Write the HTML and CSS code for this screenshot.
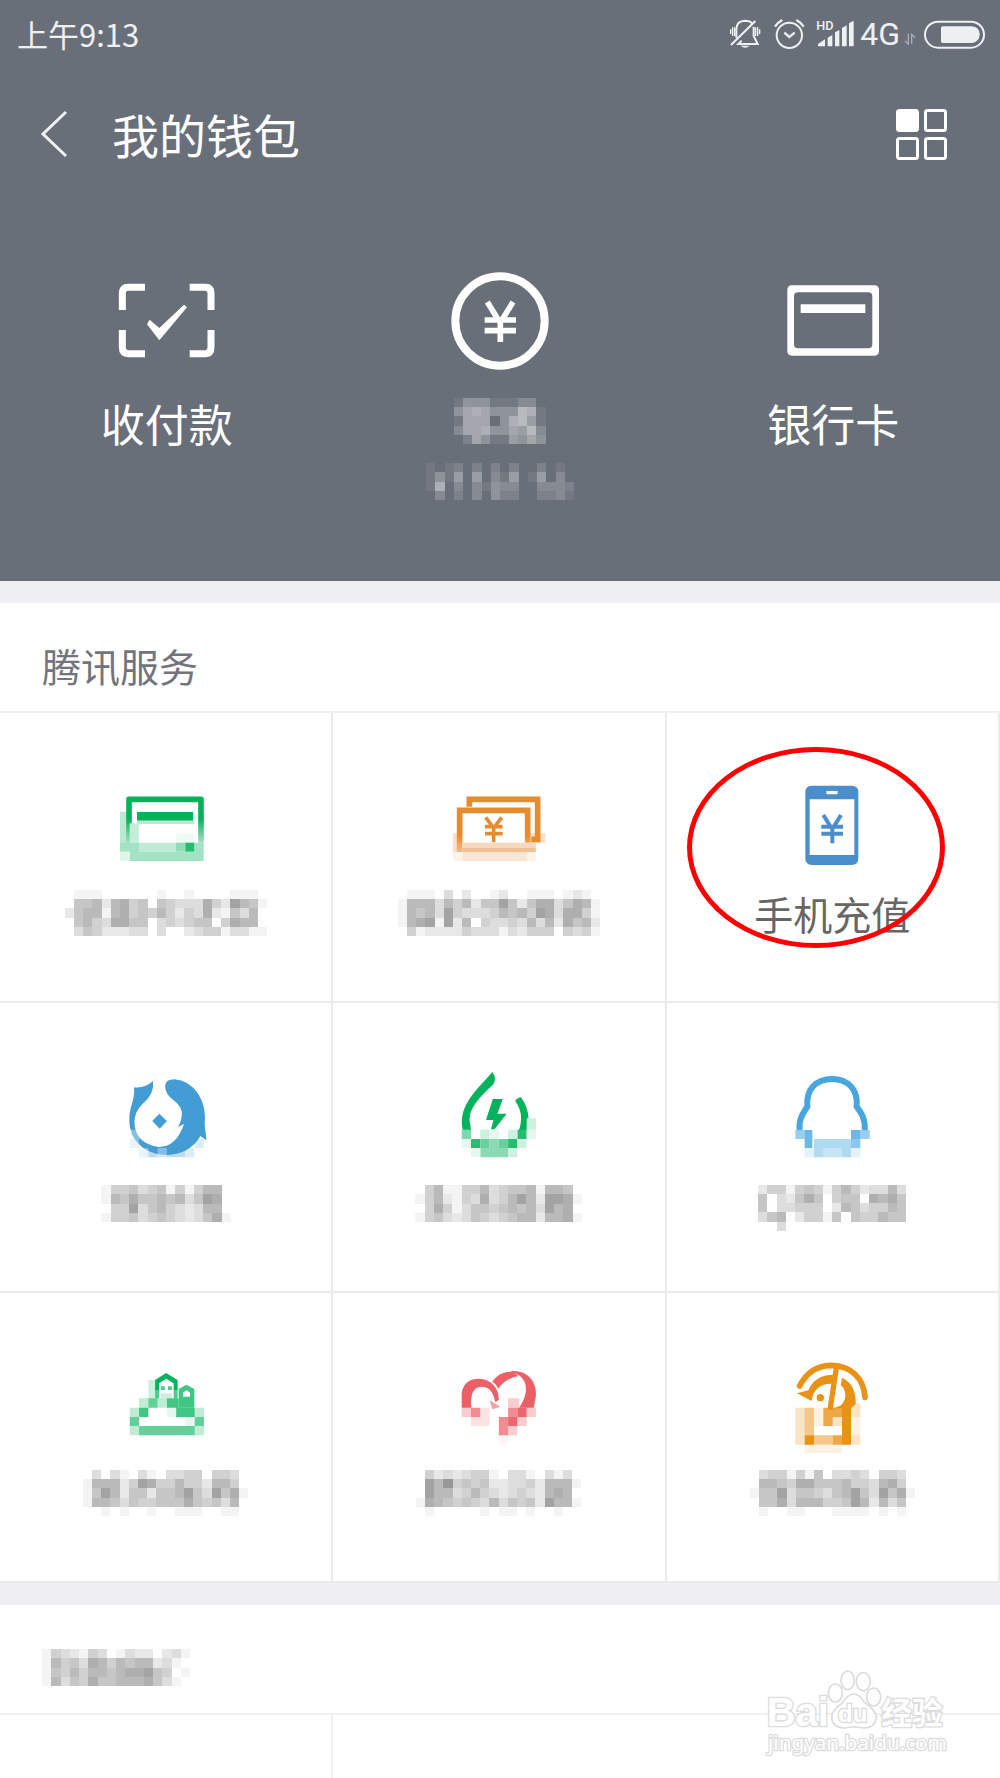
FILE: index.html
```html
<!DOCTYPE html>
<html lang="zh-CN">
<head>
<meta charset="utf-8">
<meta name="viewport" content="width=device-width, initial-scale=1">
<title>我的钱包</title>
<link rel="stylesheet" href="styles.css">
</head>
<body>
<main class="page">
  <header class="hero">
    <div class="status">
      <span class="status-time">上午9:13</span>
      <div class="status-icons">
        <svg class="ic-bell" viewBox="84 54 96 96" fill="none" stroke="#eff0f2" stroke-width="6">
          <path d="M106 113V88Q106 63 132 62Q148 62 153 70M158 80V108L170 132H112L122 122M90 135L163 63"/>
          <path d="M119 137H146Q132 149 119 137Z" fill="#eff0f2" stroke="none"/>
          <path d="M89 88V102M95 82V108M101 82V108M164 82V108M170 82V108M176 88V102" stroke-width="4"/>
        </svg>
        <svg class="ic-alarm" viewBox="216 54 96 96" fill="none" stroke="#eff0f2" stroke-width="6">
          <circle cx="265" cy="106" r="38"/>
          <path d="M250 98L265 111L281 98" stroke-width="7"/>
          <path d="M222 80Q229 68 244 60M286 60Q301 68 308 80" stroke-width="7"/>
        </svg>
        <svg class="ic-signal" viewBox="345 54 114 90" fill="#eff0f2">
          <text x="346" y="86" class="hd">HD</text>
          <path d="M351 136V129L372 115V136ZM380 136V110L394 102V136ZM402 136V94L415 87V136ZM423 136V81L437 73V136ZM444 136V67L458 59V136Z"/>
        </svg>
        <span class="net">4G</span>
        <svg class="ic-updown" viewBox="612 99 36 36" fill="none" stroke="#a9adb3" stroke-width="4">
          <path d="M625 101V132L615 123M635 132V103L646 113"/>
        </svg>
        <svg class="ic-battery" viewBox="672 57 183 87">
          <rect x="675" y="62" width="177" height="78" rx="39" fill="none" stroke="#eff0f2" stroke-width="6"/>
          <path d="M728 76H815Q838 78 839 100Q838 124 815 126H728Q723 126 723 121V81Q723 76 728 76Z" fill="#eff0f2"/>
        </svg>
      </div>
    </div>
    <div class="titlebar">
      <button class="icon-btn" type="button" aria-label="返回">
        <svg class="ic-back" viewBox="0 0 28 48" fill="none" stroke="#f0f1f2" stroke-width="3"><path d="M26 2L3 24L26 46"/></svg>
      </button>
      <h1>我的钱包</h1>
      <button class="icon-btn" type="button" aria-label="更多">
        <svg class="ic-grid" viewBox="0 0 51 51" fill="none" stroke="#fff" stroke-width="3">
          <rect x="1.5" y="1.5" width="20" height="20" rx="2" fill="#fff"/>
          <rect x="29.5" y="1.5" width="20" height="20" rx="2"/>
          <rect x="1.5" y="29.500" width="20" height="20" rx="2"/>
          <rect x="29.500" y="29.500" width="20" height="20" rx="2"/>
        </svg>
      </button>
    </div>
    <nav class="actions">
      <a class="action" href="#">
        <svg class="action-icon" viewBox="113 36 294 294" fill="none" stroke="#fff" stroke-width="21">
          <path d="M194 82H144Q126 82 126 100V150M328 82H376Q392 82 392 100V150M126 210V262Q126 281 144 281H194M392 210V262Q392 281 376 281H328"/>
          <path d="M200 193L208 179L237 204L311 134L320 142L237 241Z" fill="#fff" stroke="none"/>
        </svg>
        <span class="action-label">收付款</span>
      </a>
      <a class="action" href="#">
        <svg class="action-icon" viewBox="1112 36 294 294" fill="none" stroke="#fff">
          <circle cx="1259" cy="183" r="134" stroke-width="24"/>
          <path d="M1221 126L1254 180M1298 126L1265 180M1260 172V246M1213 180H1307M1213 212H1307" stroke-width="17"/>
        </svg>
        <span class="action-label"><svg class="mosaic light" data-rows="1444111330 4676444871 1666047851 3667446583 0264115464"></svg></span>
        <svg class="mosaic light balance" data-rows="1012020202002010 1415050315015030 1703031433003332 0302030422002231"></svg>
      </a>
      <a class="action" href="#">
        <svg class="action-icon" viewBox="672 36 294 294" fill="none" stroke="#fff">
          <path fill="#fff" fill-rule="evenodd" stroke="none" d="M696 76H943Q957 76 957 90V273Q957 287 943 287H696Q682 287 682 273V90Q682 76 696 76ZM714 97Q702 97 702 109V253Q702 265 714 265H925Q937 265 937 253V109Q937 97 925 97Z"/>
          <path d="M722 146H916" stroke-width="26"/>
        </svg>
        <span class="action-label">银行卡</span>
      </a>
    </nav>
  </header>

  <section class="group">
    <h2 class="group-title">腾讯服务</h2>
    <div class="tiles">
      <a class="tile" href="#">
        <svg class="tile-icon" viewBox="354 471 288 288">
          <defs><linearGradient id="fadeGreen" x1="0" y1="0" x2="0" y2="1"><stop offset=".45" stop-color="#03b35b"/><stop offset="1" stop-color="#a2e3c3"/></linearGradient></defs>
          <path d="M360 575H389V695H360Z" fill="#a2e3c3" opacity=".75"/>
          <path d="M387 668V538H603V668" fill="none" stroke="url(#fadeGreen)" stroke-width="17" stroke-linejoin="round"/>
          <path d="M411 576H579V602H411Z" fill="#03b35b"/>
          <path d="M411 602H583V612H411Z" fill="#b9ead1"/>
          <path d="M389 610H417V668H389Z" fill="#c5edd9"/>
          <path d="M360 668H417V695H360ZM583 668H611V695H583ZM389 695H611V723H389Z" fill="#a2e3c6"/>
          <path d="M417 668H528V695H417Z" fill="#bfead6"/>
          <path d="M528 640H583V668H528Z" fill="#eefaf4"/>
          <path d="M528 668H556V695H528Z" fill="#8fdcb7"/>
          <path d="M556 668H583V695H556Z" fill="#22bd71"/>
          <path d="M360 695H389V723H360Z" fill="#def5ea"/>
        </svg>
        <span class="tile-label"><svg class="mosaic" data-rows="0111000000100100001110 0556267450543337428651 2566167454642437215360 0564377550343455047660 0354222330300234413311"></svg></span>
      </a>
      <a class="tile" href="#">
        <svg class="tile-icon" viewBox="357 231 288 288" fill="none" stroke="#e58c2f" stroke-width="17">
          <defs><linearGradient id="fadeOrange" x1="0" y1="0" x2="0" y2="1"><stop offset=".6" stop-color="#e58c2f"/><stop offset="1" stop-color="#f0bd8c"/></linearGradient></defs>
          <path d="M363 400H389V456H363ZM583 400H611V456H583ZM612 400H640V428H612Z" fill="#f8dfc7" stroke="none"/>
          <path d="M412 320V298H617V418H598"/>
          <path d="M383 456V331H587V428" stroke="url(#fadeOrange)"/>
          <path d="M461 352L485 384L509 352M485 380V427M459 380H512M459 401H512" stroke-width="11"/>
          <path d="M391 428H611V444H391Z" fill="#f6d9be" stroke="none"/>
          <path d="M391 444H611V456H391Z" fill="#f1c092" stroke="none"/>
          <path d="M391 456H585V483H391Z" fill="#f9e6d5" stroke="none"/>
          <path d="M363 456H391V483H363ZM585 456H612V483H585Z" fill="#fdf3eb" stroke="none"/>
        </svg>
        <span class="tile-label"><svg class="mosaic" data-rows="0111030200120011101210 1666364625585257735761 1656384333465648737741 1678182604334363627562 0412222433313244404341"></svg></span>
      </a>
      <a class="tile" href="#">
        <svg class="tile-icon" viewBox="357 231 288 288" fill="#4a8ecb">
          <path fill-rule="evenodd" d="M441 257H560Q580 257 580 277V475Q580 495 560 495H441Q421 495 421 475V277Q421 257 441 257ZM434 298V465H568V298ZM484 273V283H518V273Z"/>
          <path d="M475 345L499 384M528 345L504 384M502 378V430M469 380H534M469 401H534" fill="none" stroke="#4a8ecb" stroke-width="12"/>
        </svg>
        <span class="tile-label">手机充值</span>
        <span class="mark"></span>
      </a>
      <a class="tile" href="#">
        <svg class="tile-icon" viewBox="218 51 269 288" preserveAspectRatio="none" fill="#439cd3">
          <path d="M316 93Q322 130 286 163Q264 185 264 220Q268 282 333 291Q382 290 403 222L385 232Q396 217 397 190Q396 169 374 151Q350 132 350 107Q352 88 376 88Q416 90 443 132Q466 170 461 225L466 271L449 258Q420 312 355 315Q285 312 258 255Q243 215 254 172Q265 140 263 112Q292 116 316 93ZM334 191L355 213L335 236L314 213Z"/>
          <path d="M251 267H277V294H251ZM277 294H303V322H277ZM406 294H432V322H406ZM432 267H458V294H432Z" opacity=".18"/>
          <path d="M303 294H329V322H303ZM329 294H406V322H329Z" opacity=".35"/>
          <path d="M303 239H355V267H303Z" fill="#fff" opacity=".6"/>
          <path d="M251 239H300V267H277V294H303V322H329V294H355V322H251Z" fill="#fff" opacity=".35"/>
        </svg>
        <span class="tile-label"><svg class="mosaic" data-rows="14453451414660 16575565635870 04483564323660 14453454323571"></svg></span>
      </a>
      <a class="tile" href="#">
        <svg class="tile-icon" viewBox="1154 51 269 288" preserveAspectRatio="none" fill="#03b35b">
          <path d="M1270 66Q1283 82 1273 103C1240 136 1204 173 1206 210L1210 240H1187Q1178 202 1197 163C1214 128 1242 100 1270 66ZM1334 153Q1341 142 1350 142Q1370 169 1372 210L1367 240H1345Q1360 191 1334 153ZM1271 147H1299L1284 191H1310L1276 238H1266L1273 210H1252Z"/>
          <path d="M1184 239H1210V267H1184Z" fill="#7fd8ad"/>
          <path d="M1210 267H1236V294H1210ZM1314 267H1340V294H1314ZM1340 239H1366V267H1340Z" fill="#25bd72"/>
          <path d="M1236 267H1262V294H1236ZM1288 267H1314V294H1288Z" fill="#68d09e"/>
          <path d="M1262 267H1288V294H1262ZM1236 294H1314V322H1236Z" fill="#8adbb3"/>
          <path d="M1236 239H1262V267H1236ZM1314 239H1340V267H1314ZM1340 267H1366V294H1340ZM1314 294H1340V322H1314ZM1366 205H1392V239H1366Z" fill="#cdf0df"/>
          <path d="M1184 267H1210V294H1184ZM1210 294H1236V322H1210ZM1366 239H1392V267H1366ZM1262 239H1288V267H1262Z" fill="#e5f7ee"/>
        </svg>
        <span class="tile-label"><svg class="mosaic" data-rows="046114463455616650 146214373468628871 047413554565638670 145323543456626671"></svg></span>
      </a>
      <a class="tile" href="#">
        <svg class="tile-icon" viewBox="195 51 288 288" fill="none" stroke="#47a6e0" stroke-width="18">
          <path d="M242 240C238 208 252 190 265 170C260 120 290 87 339 87C390 87 418 122 413 170C428 190 440 208 437 240"/>
          <g stroke="none" fill="#47a6e0">
            <path d="M229 240H257V267H229ZM424 240H452V267H424Z" opacity=".55"/>
            <path d="M257 240H280V294H257ZM396 240H424V267H396Z" opacity=".8"/>
            <path d="M396 267H424V294H396Z" opacity=".62"/>
            <path d="M285 267H396V294H285ZM285 294H313V322H285ZM369 294H396V322H369Z" opacity=".43"/>
            <path d="M313 294H369V322H313Z" opacity=".3"/>
            <path d="M257 294H285V322H257ZM396 294H424V322H396Z" opacity=".15"/>
          </g>
        </svg>
        <span class="tile-label"><svg class="mosaic" data-rows="0000000000000000 2441454146423363 5032575045507675 5033444026534465 3560244150544655 0030000000000000"></svg></span>
      </a>
      <a class="tile" href="#">
        <svg class="tile-icon" viewBox="218 51 269 288" preserveAspectRatio="none" fill="#03b35b">
          <path d="M303 120H323V175H303Z" opacity=".2"/>
          <path d="M322 120L353 99L385 120V150H374V130L353 116L333 130V150H322Z"/>
          <path d="M322 148H333V175H322ZM374 148H385V175H374ZM338 139H349V150H338ZM358 139H369V150H358Z" opacity=".7"/>
          <path d="M338 160H369V175H338Z" opacity=".2"/>
          <path fill-rule="evenodd" d="M388 147L410 134L432 147V203H388ZM400 158V170H420V158L410 151Z" opacity=".75"/>
          <path d="M277 175H303V203H277ZM251 203H277V231H251ZM251 258H277V286H251ZM329 175H355V203H329ZM433 203H459V231H433ZM433 258H459V286H433Z" opacity=".25"/>
          <path d="M277 203H303V231H277ZM355 175H388V203H355ZM381 203H433V231H381Z" opacity=".75"/>
          <path d="M303 175H329V203H303ZM251 231H277V258H251ZM277 258H433V286H277ZM433 231H459V258H433Z" opacity=".62"/>
          <path d="M355 203H381V231H355ZM407 231H433V258H407Z" opacity=".1"/>
        </svg>
        <span class="tile-label"><svg class="mosaic" data-rows="030310310334404430 166624874464426640 158625525568538571 166535445557545360 001010010011100110"></svg></span>
      </a>
      <a class="tile" href="#">
        <svg class="tile-icon" viewBox="1154 51 269 288" preserveAspectRatio="none" fill="#ed5f66">
          <path d="M1184 203V160C1188 128 1208 116 1233 116C1265 118 1288 140 1288 180L1278 186C1272 153 1260 140 1238 140C1217 142 1208 160 1211 203Z"/>
          <path d="M1269 125Q1292 92 1328 96L1343 108Q1302 118 1286 147Q1282 132 1269 125Z"/>
          <path d="M1320 93C1368 90 1394 122 1392 167L1386 203H1345C1370 165 1372 125 1343 105Z"/>
          <path d="M1262 180L1292 200L1270 208Z" opacity=".6"/>
          <path d="M1210 203H1236V231H1210ZM1314 203H1340V231H1314ZM1288 231H1314V286H1288Z" opacity=".72"/>
          <path d="M1340 203H1366V231H1340ZM1314 231H1340V258H1314Z" opacity=".95"/>
          <path d="M1184 203H1210V231H1184ZM1340 231H1366V258H1340ZM1314 258H1340V286H1314ZM1366 203H1392V231H1366ZM1314 175H1345V203H1314Z" opacity=".32"/>
          <path d="M1210 231H1262V258H1210ZM1236 203H1262V231H1236Z" opacity=".18"/>
          <path d="M1288 286H1314V314H1288Z" opacity=".06"/>
        </svg>
        <span class="tile-label"><svg class="mosaic" data-rows="042323441033103130 086945452233426661 086634643234326760 176545436354528661 010000010110100100"></svg></span>
      </a>
      <a class="tile" href="#">
        <svg class="tile-icon" viewBox="195 51 288 288" fill="#e99216">
          <path d="M242 138C266 90 300 76 338 76C398 78 434 115 438 172" fill="none" stroke="#e99216" stroke-width="17" stroke-linecap="round"/>
          <path d="M344 84H360L341 210H325Z"/>
          <path d="M234 160L268 151Q288 104 342 104L339 131C302 130 282 150 278 183Z"/>
          <circle cx="304" cy="173" r="11"/>
          <path d="M369 113Q412 133 410 192L396 205H340Q378 200 379 165Q378 145 365 136Z"/>
          <path d="M369 203H396V314H369ZM257 286H285V314H257Z"/>
          <path d="M313 203H369V231H313ZM313 231H341V258H313ZM341 286H369V314H341Z" opacity=".8"/>
          <path d="M257 203H285V286H257ZM285 286H341V314H285Z" opacity=".5"/>
          <path d="M229 203H257V314H229ZM396 190H424V231H396ZM396 286H424V314H396ZM341 231H369V258H341Z" opacity=".25"/>
          <path d="M257 314H369V341H257ZM285 203H313V258H285ZM396 231H424V286H396Z" opacity=".12"/>
        </svg>
        <span class="tile-label"><svg class="mosaic" data-rows="034414150334304430 066547755564436740 155835543568538571 055736664458626350 010011000111101010"></svg></span>
      </a>
    </div>
  </section>

  <section class="group last">
    <h2 class="group-title"><svg class="mosaic" data-rows="1432143013220231 1645376465662310 1546466567785401 1635475566675310"></svg></h2>
    <div class="tiles stub"><span></span></div>
  </section>

  <svg class="brand" viewBox="192 264 552 276" role="img" aria-label="Baidu 经验">
    <g fill="#fff" stroke="#dcdcdc" stroke-width="5">
      <text x="200" y="438" class="brand-latin">Bai</text>
      <ellipse cx="406" cy="339" rx="21" ry="27"/>
      <ellipse cx="443" cy="301" rx="20" ry="28"/>
      <ellipse cx="490" cy="305" rx="21" ry="27"/>
      <ellipse cx="521" cy="351" rx="21" ry="27"/>
      <path d="M461 342Q481 344 492 366Q529 392 529 414Q522 446 490 444Q461 438 434 444Q398 444 395 412Q396 390 426 370Q442 344 461 342Z"/>
      <text x="414" y="427" class="brand-du">du</text>
      <text x="544" y="432" class="brand-cjk">经验</text>
      <text x="204" y="511" class="brand-url">jingyan.baidu.com</text>
    </g>
  </svg>
</main>
<script src="mosaic.js"></script>
</body>
</html>
```

FILE: styles.css
```css
* { box-sizing: border-box; }

body {
  margin: 0;
  background: #fff;
  font-family: "Noto Sans CJK SC", "Noto Sans", sans-serif;
}

svg { display: block; flex: none; }

a { color: inherit; text-decoration: none; }

h1, h2 { margin: 0; font-weight: 400; }

.page {
  position: relative;
  display: flex;
  flex-direction: column;
  min-height: 100vh;
}

/* header */
.hero {
  background: #696f79;
  color: #fff;
  padding-bottom: 81px;
}

.status {
  display: flex;
  align-items: center;
  justify-content: space-between;
  height: 68px;
  padding: 0 15px 0 17px;
  color: #eff0f2;
}

.status-time { font-size: 31px; line-height: 40px; }

.status-icons { display: flex; align-items: center; }

.ic-bell { width: 32px; height: 32px; margin-right: 12px; }
.ic-alarm { width: 32px; height: 32px; margin-right: 11px; }
.ic-signal { width: 38px; height: 30px; margin-right: 6px; }
.hd { font: 500 38px Roboto, sans-serif; }
.net { font: 32px/40px Roboto, sans-serif; margin-right: 4px; }
.ic-updown { width: 12px; height: 12px; margin: 10px 8px 0 0; }
.ic-battery { width: 61px; height: 29px; }

.titlebar {
  display: flex;
  align-items: center;
  height: 132px;
  padding: 0 53px 0 40px;
}

.titlebar h1 { flex: 1; margin-left: 44px; font-size: 47px; line-height: 64px; }

.icon-btn { padding: 0; border: 0; background: none; }
.ic-back { width: 28px; height: 48px; }
.ic-grid { width: 51px; height: 51px; }

.actions {
  display: grid;
  grid-template-columns: repeat(3, 1fr);
  padding-top: 72px;
}

.action { display: flex; flex-direction: column; align-items: center; }
.action-icon { width: 98px; height: 98px; }
.action-label { height: 50px; margin-top: 28px; font-size: 44px; line-height: 50px; }
.balance { margin-top: 15px; }

/* service groups */
.group { border-top: 22px solid #efeff4; }

.group-title {
  display: flex;
  align-items: center;
  height: 110px;
  padding: 16px 42px 0;
  border-bottom: 2px solid #f0f0f0;
  color: #74747c;
  font-size: 39px;
  line-height: 60px;
}

.tiles { display: grid; grid-template-columns: repeat(3, 1fr); }

.tile {
  position: relative;
  display: flex;
  flex-direction: column;
  align-items: center;
  gap: 16px;
  padding: 64px 0;
  border: solid #ebebeb;
  border-width: 0 2px 2px 0;
  color: #666;
}

.tile-icon { width: 96px; height: 96px; }

.tile-label {
  display: flex;
  align-items: center;
  justify-content: center;
  height: 48px;
  font-size: 39px;
  line-height: 48px;
}

.mark {
  position: absolute;
  top: 34px;
  left: 20px;
  width: 258px;
  height: 201px;
  border: 5px solid #f00;
  border-radius: 50%;
}

.last { display: flex; flex: 1; flex-direction: column; }
.stub { flex: 1; }
.stub span { border-right: 2px solid #f0f0f0; }

/* masked text */
.mosaic { fill: #000; shape-rendering: crispEdges; }
.mosaic.light { fill: #fff; }

/* watermark */
.brand { position: absolute; right: 52px; bottom: 18px; width: 184px; height: 92px; }
.brand text { paint-order: stroke; stroke-width: 8px; }
.brand-latin { font: bold 120px "Liberation Sans", sans-serif; }
.brand-du { font: bold 72px "Liberation Sans", sans-serif; }
.brand-cjk { font: bold 92px "Noto Sans CJK SC", sans-serif; }
.brand-url { font: 62px "Noto Sans", sans-serif; }
```

FILE: mosaic.js
```js
// Draws masked labels: each digit in data-rows is the strength of one square.
const CELL = 9.25;
const NS = "http://www.w3.org/2000/svg";

document.querySelectorAll(".mosaic").forEach((svg) => {
  const rows = svg.dataset.rows.split(" ");
  const cols = rows[0].length;
  const step = svg.classList.contains("light") ? 0.065 : 0.045;
  svg.setAttribute("viewBox", `0 0 ${cols} ${rows.length}`);
  svg.setAttribute("width", Math.round(cols * CELL));
  svg.setAttribute("height", Math.round(rows.length * CELL));
  svg.setAttribute("aria-hidden", "true");
  rows.forEach((row, y) => {
    [...row].forEach((digit, x) => {
      if (digit === "0") return;
      const rect = document.createElementNS(NS, "rect");
      rect.setAttribute("x", x);
      rect.setAttribute("y", y);
      rect.setAttribute("width", 1);
      rect.setAttribute("height", 1);
      rect.setAttribute("fill-opacity", digit * step);
      svg.append(rect);
    });
  });
});
```
